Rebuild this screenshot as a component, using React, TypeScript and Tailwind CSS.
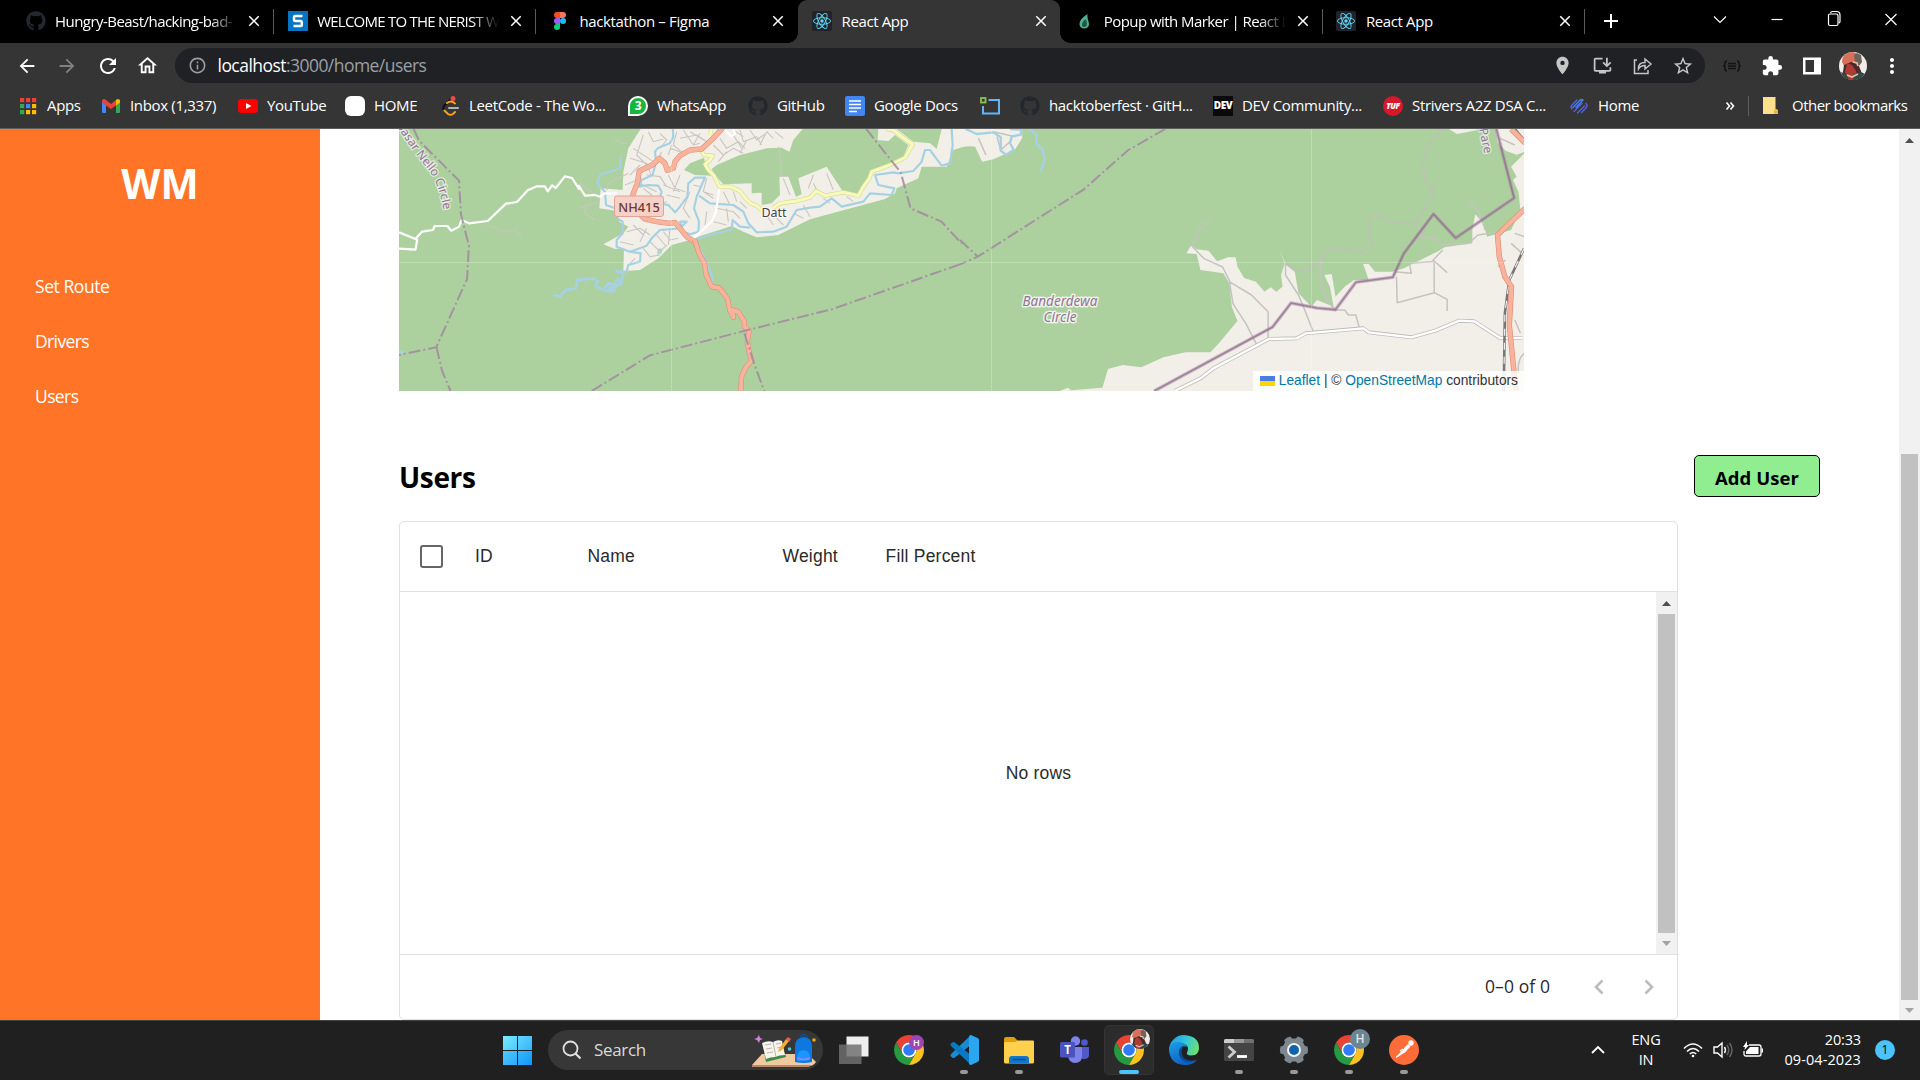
import React from "react";
import {
  MdArrowBack, MdArrowForward, MdRefresh, MdOutlineHome, MdInfoOutline, MdLocationOn,
  MdStarBorder, MdExtension, MdMoreVert, MdClose, MdAdd, MdInstallDesktop,
} from "react-icons/md";
import { FaGithub } from "react-icons/fa";

const UI = "font-['Open_Sans','Noto_Sans',sans-serif]";
const ARIAL = "font-['Liberation_Sans',Arial,sans-serif]";

function Github() {
  return <FaGithub className="size-5 text-[#22282e]" />;
}

function ReactLogo() {
  return (
    <svg viewBox="0 0 20 20" className="size-5">
      <rect width="20" height="20" rx="2" fill="#20232a" />
      <g fill="none" stroke="#61dafb" strokeWidth="0.9">
        <ellipse cx="10" cy="10" rx="8.6" ry="3.3" />
        <ellipse cx="10" cy="10" rx="8.6" ry="3.3" transform="rotate(60 10 10)" />
        <ellipse cx="10" cy="10" rx="8.6" ry="3.3" transform="rotate(120 10 10)" />
      </g>
      <circle cx="10" cy="10" r="1.7" fill="#61dafb" />
    </svg>
  );
}

function Figma() {
  return (
    <svg viewBox="0 0 20 20" className="size-5">
      <path d="M10 1H7a3 3 0 0 0 0 6h3z" fill="#f24e1e" />
      <path d="M10 1h3a3 3 0 0 1 0 6h-3z" fill="#ff7262" />
      <path d="M10 7H7a3 3 0 0 0 0 6h3z" fill="#a259ff" />
      <circle cx="13" cy="10" r="3" fill="#1abcfe" />
      <path d="M7 13h3v3a3 3 0 1 1-3-3z" fill="#0acf83" />
    </svg>
  );
}

function SiteS() {
  return (
    <svg viewBox="0 0 20 20" className="size-5">
      <rect width="20" height="20" fill="#0474c4" />
      <path d="M14.500 5H7.300q-1.300 0-1.300 1.300v2.400Q6 10 7.300 10h5.200q1.300 0 1.300 1.300v2.400q0 1.300-1.300 1.300H5.500" fill="none" stroke="#fff" strokeWidth="2.4" />
    </svg>
  );
}

function Leaf() {
  return (
    <svg viewBox="0 0 20 20" className="size-5">
      <path d="M13.500 3C9 6 5.500 9 5.500 13.500a4.800 4.800 0 0 0 9.500 0C15 10 13 8 13.500 3z" fill="#4fae90" />
      <path d="M12 8c-3 2-4.500 4-4 7 2 2 5 1 5-2z" fill="#24574a" />
    </svg>
  );
}

const tabs = [
  { title: "Hungry-Beast/hacking-bad-", icon: <Github />, tracking: "tracking-[-0.036em]", fade: true, divider: true },
  { title: "WELCOME TO THE NERIST W", icon: <SiteS />, tracking: "tracking-[-0.051em]", fade: true, divider: true },
  { title: "hacktathon – Figma", icon: <Figma />, tracking: "tracking-[-0.024em]" },
  { title: "React App", icon: <ReactLogo />, tracking: "tracking-[-0.026em]", active: true },
  { title: "Popup with Marker | React L", icon: <Leaf />, tracking: "tracking-[-0.037em]", fade: true, divider: true },
  { title: "React App", icon: <ReactLogo />, tracking: "tracking-[-0.026em]", divider: true },
];

function TabStrip() {
  return (
    <div className="flex h-[43px] bg-black pl-[11px] text-white">
      {tabs.map((t, i) => (
        <div
          key={i}
          className={`relative flex w-[262.200px] items-center pb-px pl-[14.500px] ${t.active ? "rounded-t-[9px] bg-[#353535]" : ""}`}
        >
          {t.active && (
            <>
              <span className="absolute bottom-0 -left-[10px] size-[10px] bg-[radial-gradient(circle_at_0_0,transparent_9.500px,#353535_10px)]" />
              <span className="absolute -right-[10px] bottom-0 size-[10px] bg-[radial-gradient(circle_at_100%_0,transparent_9.500px,#353535_10px)]" />
            </>
          )}
          {t.icon}
          <span
            className={`ml-[9.500px] w-[182px] overflow-hidden text-[15px] leading-5 whitespace-nowrap ${t.tracking} ${t.fade ? "[mask-image:linear-gradient(to_right,black_155px,transparent_182px)]" : ""}`}
          >
            {t.title}
          </span>
          <MdClose className="ml-[8px] size-[18px] shrink-0" />
          {t.divider && <span className="absolute top-[9px] -right-px h-[25px] w-px bg-[#5a5a5a]" />}
        </div>
      ))}
      <div className="flex w-[54px] items-center justify-center pb-px">
        <MdAdd className="size-[24px]" />
      </div>
      <div className="ml-auto flex h-[37px] items-center gap-[29px] pr-[15px]">
        {["M8 11.500l6 6L20 11.500", "M8.500 14.500h11", "", "M8.500 9l11 11M19.500 9l-11 11"].map((d, i) => (
          <svg key={i} viewBox="0 0 28 28" className="size-[28px]" fill="none" stroke="#fff" strokeWidth="1.200">
            {d ? <path d={d} /> : <path d="M8.500 10.500q0-1.500 1.500-1.500h6.500q1.500 0 1.500 1.500v8.500q0 1.500-1.500 1.500H10q-1.500 0-1.500-1.500zM10.500 8q.5-1.500 2-1.500h4q3.500 0 3.500 3.500v6.500q0 1-1 1.500" />}
          </svg>
        ))}
      </div>
    </div>
  );
}

function Avatar({ className }: { className: string }) {
  return (
    <svg viewBox="0 0 28 28" className={className}>
      <defs><clipPath id="avatarClip"><circle cx="14" cy="14" r="14" /></clipPath></defs>
      <g clipPath="url(#avatarClip)">
        <rect width="28" height="28" fill="#f1ece8" />
        <path d="M3 10Q3 1 12 0q6 0 7 5l-3 7-10 4z" fill="#d9715a" />
        <path d="M15 3l3-2 4 2 1 7-3 4-4-3z" fill="#6c635a" />
        <path d="M5 13l7-3 7 2 3 7 1 9H6L4 20z" fill="#4a2a2a" />
        <path d="M8 11l5 2 4 6 2 9H9l-3-8z" fill="#b03a34" />
        <path d="M2 20l5 2 3 6H4zM15 22l7-2 4 2-6 6h-6z" fill="#2d4a46" />
        <path d="M8 23l5 2 6-3M14 10l4 1 1 3" stroke="#eeb8a4" strokeWidth="1.800" fill="none" />
      </g>
    </svg>
  );
}

function Toolbar() {
  return (
    <div className="flex h-[45px] items-center bg-[#353535] text-white">
      <div className="flex w-[175px] items-center gap-[18px] pl-[16px]">
        <MdArrowBack className="size-[22px]" />
        <MdArrowForward className="size-[22px] text-[#808080]" />
        <MdRefresh className="size-[24px]" />
        <MdOutlineHome className="-ml-[2px] size-[23px]" />
      </div>
      <div className="flex h-[35px] w-[1530px] items-center rounded-full bg-[#202124] pl-[13px]">
        <MdInfoOutline className="size-[19px] text-[#9aa0a6]" />
        <span className="ml-[10.500px] text-[17.500px] tracking-[-0.031em] text-[#9aa0a6]">
          <span className="text-white">localhost</span>:3000/home/users
        </span>
        <div className="ml-auto flex items-center gap-[19px] pr-[11px] text-[#c4c7c5]">
          <MdLocationOn className="size-[21px]" />
          <MdInstallDesktop className="size-[21px]" />
          <svg viewBox="0 0 21 21" className="size-[21px]" fill="none" stroke="currentColor" strokeWidth="1.500">
            <path d="M5 5H2.500v13.500h13.500V15M6.500 14q-.5-6.500 6.500-6.500V4l6 5-6 5v-3.500q-4.500 0-6.500 3.500z" />
          </svg>
          <MdStarBorder className="size-[22px]" />
        </div>
      </div>
      <div className="flex flex-1 items-center gap-[19px] pl-[17px]">
        <svg viewBox="0 0 20 20" className="size-5" fill="none" stroke="#141414" strokeWidth="1.600">
          <path d="M5 5Q3 5 3 7v1q0 2-2 2 2 0 2 2v1q0 2 2 2M15 5q2 0 2 2v1q0 2 2 2-2 0-2 2v1q0 2-2 2M6 7.500h8M6 10h8M6 12.500h8" />
        </svg>
        <MdExtension className="size-[22px]" />
        <svg viewBox="0 0 20 20" className="size-5">
          <path d="M1 1.500h18v17H1zM3.500 4v12H12V4z" fill="#fff" fillRule="evenodd" />
        </svg>
        <Avatar className="-ml-[2px] size-[28px]" />
        <MdMoreVert className="-ml-[6px] size-[24px]" />
      </div>
    </div>
  );
}

const appColors = ["#ea4335", "#ea4335", "#ea4335", "#34a853", "#4285f4", "#fbbc04", "#34a853", "#fbbc04", "#fbbc04"];

const bookmarks = [
  {
    label: "Apps", w: "w-[83px]",
    icon: (
      <svg viewBox="0 0 20 20" className="size-5">
        {appColors.map((c, i) => <rect key={i} x={2 + (i % 3) * 6} y={2 + Math.floor(i / 3) * 6} width="4.200" height="4.200" fill={c} />)}
      </svg>
    ),
  },
  {
    label: "Inbox (1,337)", w: "w-[137px]",
    icon: (
      <svg viewBox="0 0 20 20" className="size-5">
        <path d="M1 5v11q0 1 1 1h3V8z" fill="#4285f4" /><path d="M15 8v9h3q1 0 1-1V5z" fill="#34a853" />
        <path d="M1 5q.5-3 3.500-1.500L10 8l5.500-4.500Q18.500 2 19 5v1l-4 3.500-5 3.500-5-3.500L1 6z" fill="#ea4335" />
        <path d="M15 4q3.500-2 4 1v1.500l-4 3z" fill="#fbbc04" />
      </svg>
    ),
  },
  {
    label: "YouTube", w: "w-[107px]",
    icon: (
      <svg viewBox="0 0 20 20" className="size-5">
        <rect y="3" width="20" height="14" rx="3.500" fill="#f00" /><path d="M8 7l5.500 3L8 13z" fill="#fff" />
      </svg>
    ),
  },
  { label: "HOME", w: "w-[95px]", icon: <span className="size-5 rounded-[6px] bg-white" /> },
  {
    label: "LeetCode - The Wo...", w: "w-[188px]",
    icon: (
      <svg viewBox="0 0 20 20" className="size-5" fill="none" strokeLinecap="round" strokeWidth="2">
        <path d="M12 2L4 10q-1.500 2 0 4" stroke="#111" /><path d="M4.500 14.500L8 18q2.500 1.500 5 0l2-2" stroke="#ffa116" />
        <path d="M7 7q3-2.500 6-1l2 1.500" stroke="#ffa116" /><path d="M9 12h9" stroke="#b3b3b3" />
        <circle cx="13" cy="2.500" r="1.500" fill="#e84e4e" stroke="#e84e4e" />
      </svg>
    ),
  },
  {
    label: "WhatsApp", w: "w-[120px]",
    icon: (
      <span className="flex size-5 items-center justify-center rounded-full rounded-bl-[4px] border-2 border-white bg-[#12b83a] text-[12px] font-bold">3</span>
    ),
  },
  { label: "GitHub", w: "w-[97px]", icon: <Github /> },
  {
    label: "Google Docs", w: "w-[135px]",
    icon: (
      <svg viewBox="0 0 20 20" className="size-5">
        <rect width="20" height="20" rx="2" fill="#4285f4" />
        <path d="M4 5h12M4 8.500h12M4 12h12M4 15.500h8" stroke="#fff" strokeWidth="1.700" />
      </svg>
    ),
  },
  {
    label: "", w: "w-[40px]",
    icon: (
      <svg viewBox="0 0 20 20" className="size-5" fill="none">
        <rect x="1" y="2" width="4.500" height="4.500" stroke="#8bc34a" strokeWidth="1.800" />
        <path d="M8.500 4H19v13.500H3V10" stroke="#64b5f6" strokeWidth="2" />
      </svg>
    ),
  },
  { label: "hacktoberfest · GitH...", w: "w-[193px]", icon: <Github /> },
  {
    label: "DEV Community...", w: "w-[170px]",
    icon: <span className="flex size-5 items-center justify-center bg-[#0a0a0a] text-[10px] font-extrabold tracking-tighter">DEV</span>,
  },
  {
    label: "Strivers A2Z DSA C...", w: "w-[186px]",
    icon: <span className="flex size-5 items-center justify-center rounded-full bg-[#d7182a] text-[8px] font-extrabold tracking-tighter italic">TUF</span>,
  },
  {
    label: "Home", w: "w-[150px]",
    icon: (
      <svg viewBox="0 0 20 20" className="size-5" fill="none" stroke="#5561e0" strokeWidth="1.400" strokeLinecap="round">
        <path d="M3 13q-2-2 0-4L8 4M5 15.500L13 7.500M8.500 17l7-7M17 7.500q2 2 0 4.500L12.500 16.500" /><path d="M4 11.500l7-7.500q2-1 3 0l-7 7.500" stroke="#4285f4" />
      </svg>
    ),
  },
];

function BookmarksBar() {
  return (
    <div className="flex h-[41px] items-center border-b border-[#5d5d5d] bg-[#353535] pb-[5px] pl-[18px] text-[15px] tracking-[-0.022em] whitespace-nowrap text-white">
      {bookmarks.map((b, i) => (
        <div key={i} className={`flex shrink-0 items-center gap-[9px] ${b.w}`}>
          <span className="flex size-5 shrink-0">{b.icon}</span>
          {b.label}
        </div>
      ))}
      <div className="flex flex-1 items-center pl-[6px] tracking-[-0.035em]">
        <svg viewBox="0 0 10 10" className="size-[10px]" fill="none" stroke="#fff" strokeWidth="1.600"><path d="M1.500 1.500L4.500 5l-3 3.500M5.500 1.500l3 3.500-3 3.500" /></svg>
        <span className="ml-[13px] h-5 w-px bg-[#5f5f5f]" />
        <svg viewBox="0 0 18 20" className="mr-[12px] ml-[13px] h-5 w-[18px]">
          <path d="M1 1h12.500v12l2 1v4H1z" fill="#ffe08a" /><path d="M12 18v-4l2-1 2 1v4z" fill="#e8b93c" />
        </svg>
        Other bookmarks
      </div>
    </div>
  );
}

const labelHalo = { paintOrder: "stroke" as const };

const yellowRoad =
  "M395 12L390 30M365 78L372 90 398 92 390 105 375 118 385 135 402 152 418 185 450 185 480 198 498 222 512 235 530 242 545 255M580 248L600 235 650 228 690 218 708 198 735 212 790 202 835 212 850 185 868 160 875 140 930 120 975 98 998 58 965 35 940 15 920 12";
const highwayNorth =
  "M428 8L400 40 365 72 330 75 300 92 285 110 280 130 262 136 255 115 238 100 220 118 178 138 172 175 160 205 150 240 195 282 230 290 270 295 285 292 300 310 320 335 345 350 348 362";
const highwaySouth =
  "M838 360L850 400 865 430 870 465 885 500 905 503 928 535 935 570 945 592 942 570 958 575 975 605 975 620 988 632 983 665 988 695 995 722 980 740 967 770 965 813";
const highwayEast = "M1490 27l38 42M1528 265l-75 80 5 65 15 60 18 30-6 115 18 200";

function RouteMap() {
  return (
    <svg viewBox="399 129 1125 262" className="block h-[262px] w-[1125px]" fill="none" strokeLinejoin="round">
      <rect x="399" y="129" width="1125" height="262" fill="#add19e" />

      {/* town built-up area and the forest patches inside it */}
      <g transform="translate(580 125) scale(0.33333)">
        <path d="M182 12L145 70 130 140 128 195 62 190 58 250 112 258 118 290 145 305 130 325 70 358 105 372 132 368 130 438 180 435 235 400 275 360 330 345 370 330 455 303 490 320 530 337 595 330 690 283 915 222 945 205 950 190 1015 160 1025 125 1100 125 1120 75 1160 62 1188 65 1200 90V12z" fill="#f2efe9" />
        <path d="M410 120L480 90 560 70 605 68 628 80 640 45 668 12H895L893 45 925 48 945 30 985 60 970 95 870 140 860 165 840 208 790 202 740 125 655 160 665 208 648 215 625 155 598 155 600 210 575 235 545 240 545 203 515 205 515 175 430 178 405 150 395 132z" fill="#add19e" />
        <path d="M950 12L1000 50 1050 55 1070 72 1085 12zM312 135L330 115 372 98 380 130 398 152 345 150z" fill="#add19e" />
        <path d="M232 375l8-7 8 6-4 12-12 4z" fill="#a9dfc8" />
        <g stroke="#c9c6c2" strokeWidth="3.300">
          <path d="M160 70l60 40M190 30l-20 60 40 40M205 20l15 30 30-8M150 100l50 15 15 40M150 150l30-30M135 180l50-20M240 25l20 20-20 25M245 80l-15 35M290 20l-10 40 30 25M300 40l50-10 30 20M310 15l30 45 20-5M330 20l50 30M340 60l20-35M270 70l30 10M265 90l10-30M420 40l20 30 35-20 20 20M400 60l30 30 30-20 30 15M440 80l-25 30M460 30l25 40M480 15l10 35 40-15 15 25M510 15l20 30 35-25M540 60l20-40M480 85l20-40M560 20l20 20M585 20l25 20M460 15l30 20" />
          <path d="M200 150l40 5 20 30M190 190l25 20-5 30M170 170l60 30M265 150l20 40 30 10M250 180l50 20M260 210l40 10M300 150l-20 50M230 240l30-10M330 200l-20 50 20 30M340 180l20 5M380 160l-10 40 30 20M370 200l30 10M430 200l20 40M460 200l10 30M410 250l50 10 20 20M380 260l-5 40M400 290l40 10M440 250l5 40M480 230l20 20" />
          <path d="M140 320l40-10 30 20M160 300l30 30M180 350l20-40M190 370l20 25 30-5M210 350l30 30 20-20M230 330l25 30M250 320l20 25 25-5M165 400l-15 15M270 310l-5 50M120 350l40 10M590 280l20 20M560 270l20 30M670 240l20 35M640 265l30 15M700 175l15 30M740 145l20 50M700 150l-15 40M610 160l20 50M730 220l20 15M800 215l20 15" />
          <path d="M595 65l10 60-5 30M80 195l5-20 60-30M0 175l40 30M105 40l20 15 15 0M0 250l60-20M20 235l-5 30 30 20" />
        </g>
        <g stroke="#a5d1e2" strokeWidth="6.500">
          <path d="M278 12L280 35 270 55 235 68 225 80 228 110 218 150 185 165 178 185 205 180 235 182 245 200 235 235 265 240 285 262 300 245 322 215 325 175 345 158 375 158 365 180 350 215 342 250 357 290 355 320 330 328 310 320 300 290 320 290 300 310 240 315 215 340 200 362 150 380 110 365 110 345 128 325 128 290 112 280" />
          <path d="M357 212L390 235 460 240 490 260 505 295 530 322 580 320 620 305 650 255 690 248 720 245 755 220 785 245 850 230 870 205 935 210 943 190 895 180 885 150 940 142 955 145 1000 138 1025 110 1035 75 1050 75 1085 122 1110 115 1118 60 1115 12M350 345L385 330 455 315 458 285 480 305 510 308M350 360L370 390 395 450 400 480M122 95L120 130 60 150 52 175 75 200 78 240 105 250M150 380L182 385 180 410 145 420 140 440 105 440" />
        </g>
        <path d="M-5 180L15 212 45 210 60 215 75 205 110 205M418 190L408 260 395 290 340 340M435 15l20 20 10-10-5-13" stroke="#fff" strokeWidth="6.500" />
        <path d={yellowRoad} stroke="#d6dd8c" strokeWidth="13" />
        <path d={yellowRoad} stroke="#f7fabf" strokeWidth="9" />
        <path d={highwayNorth} stroke="#dc8c74" strokeWidth="16" />
        <path d={highwayNorth} stroke="#f9b29c" strokeWidth="13" />
      </g>

      {/* western hills */}
      <g transform="translate(390 120) scale(0.3635 0.33333)">
        <path vectorEffect="non-scaling-stroke" stroke="#bccbb0" strokeWidth="1.800" d="M265 315l30 10 20 10 30-5 15 20" />
        <path vectorEffect="non-scaling-stroke" stroke="#a5d1e2" strokeWidth="2.800" d="M450 525l18 5 15-20 28-5 5-25 40-5 15 8-5 15 25 15 25 0 0-18-15-5-10 15M600 505l20-5 18-10 3-30-20-8M612 505l15-30 10 20M25 695l15 3" />
        <path vectorEffect="non-scaling-stroke" stroke="#fff" strokeWidth="2.200" d="M25 337l50 22-5 30-45-3M70 357l18-22 30-5 5-12 35 0 10 14 22-12 7-20 20 10 52-7 50-52 30-5 30-35 25-12 22 0 8 15 12-18 10 8 25-35 20 5 20 35" />
        <path vectorEffect="non-scaling-stroke" stroke="#dc8c74" strokeWidth="5.200" d={highwaySouth} />
        <path vectorEffect="non-scaling-stroke" stroke="#f9b29c" strokeWidth="4.100" d={highwaySouth} />
        <g stroke="#a287a0" strokeOpacity="0.850" strokeWidth="2" strokeDasharray="12 3 2 3">
          <path vectorEffect="non-scaling-stroke" d="M65 27l15 35 110 120 5 100 22 95-5 100-85 205-102 23M128 682l15 70 25 65" />
          <path vectorEffect="non-scaling-stroke" d="M555 813l160-107 280-79 220-59 353-135M1310 27l95 130 27 108 85 40 55 65M975 640l25 85 30 90" />
        </g>
      </g>

      {/* eastern half: plains, district border, railway */}
      <g transform="translate(960 120) scale(0.3699 0.33333)">
        <path d="M0 27V80L40 78 60 125 90 118 148 90 168 55V27z" fill="#f2efe9" />
        <path d="M270 813l22-10 8 8 85-8 15-56 40-12 50 7 60-30 60-15h67l23-27 50-67-15-43-7-70-16-30-62-10-10-48-28-2 13-24 15 12 32 4 23 32 30-12h20l5 28 18 34 32 11 23 30 17-13 15 13 17-15-4-35 10-35-13-35 15 35 25 25 10 65 35 40 15-20 45 20-10-60-15-35 20-3 10 68 25-30 25-20h40l-15-48h15l17 23h48l30-10 90-50 20-13 75-12v-40l8-47 22 27 10 40 65-20 25-60-5-55-15-35 10-10-15-30 38-42V813z" fill="#f2efe9" />
        <path d="M1322 27l22 15 55-12 0-3zM1448 27l5 40 22 25 30 12 25-10V27z" fill="#f2efe9" />
        <g stroke="#c4c3c0" strokeWidth="1.500">
          <path vectorEffect="non-scaling-stroke" d="M625 376l35 40 50 25 18 40 10 70 35 60 30 65M728 485l60 40 45 50 0 80M880 430l0 35 35 60 15 40 25 70M975 420l0 60 15 60 25 30 25 0 10 15 20 0 10 40M1240 320l10 35 30-5 25 25 70-5 25-25 60-10M1180 470l2 78 100-30 35 20 0 35M1282 518l0-95 35 35M1215 430l5 30-45-5M1215 430l60-5 30-35" />
          <path vectorEffect="non-scaling-stroke" d="M1375 250l25 20 20 60M1490 370l30 30M1495 500l-5 35M1500 600l15 40M1525 700q-20 20-15 60M1475 420l-20 20M1500 340l25 10M1500 75l-40-20M630 375l15-45 30-25M50 55l20 50M100 50l10 40 30-30M90 35l60 15" />
        </g>
        <path vectorEffect="non-scaling-stroke" stroke="#b9c5b0" strokeWidth="2.200" d="M880 430l30 25 35-5 30-35 30-30 50 0 35 15 25-25-12-40 5-45 25-3 40 20 60 5 15-30 28-45 3-35-22-20-5-60 15-50 20-25 18-20" />
        <g stroke="#bebdba" strokeWidth="4"><path vectorEffect="non-scaling-stroke" d="M580 813l70-38 35-30 150-88 75-2 25-15 155-15 15 12 115 15 65-20 65-30 40 2 70 50 60 0" /></g>
        <g stroke="#fff" strokeWidth="2.400"><path vectorEffect="non-scaling-stroke" d="M580 813l70-38 35-30 150-88 75-2 25-15 155-15 15 12 115 15 65-20 65-30 40 2 70 50 60 0" /></g>
        <g stroke="#a5d1e2" strokeWidth="2.400">
          <path vectorEffect="non-scaling-stroke" d="M15 27l30 15 45-5 20 15 0 40 15 12 20-15-10-20 5-20 25-5 0-15-30-2" />
          <path vectorEffect="non-scaling-stroke" d="M185 27l22 15 0 30 15 15 8 30-12 38" />
        </g>
        <path vectorEffect="non-scaling-stroke" stroke="#a287a0" strokeOpacity="0.850" strokeWidth="2" strokeDasharray="12 3 2 3" d="M555 27L455 90 335 208 48 410 0 433M0 360l48 50" />
        <path vectorEffect="non-scaling-stroke" stroke="#a988a5" strokeOpacity="0.550" strokeWidth="3.600" d="M525 813l320-192 50-72 70 15 50 5 55-82 100-15 30-72 80-118 60 72 158-120-48-207" />
        <path vectorEffect="non-scaling-stroke" stroke="#8a6a88" strokeOpacity="0.700" strokeWidth="1.500" d="M525 813l320-192 50-72 70 15 50 5 55-82 100-15 30-72 80-118 60 72 158-120-48-207" />
        <path vectorEffect="non-scaling-stroke" stroke="#777" strokeWidth="2.600" d="M1500 27l30 40M1525 385l-40 95-12 100-3 233" />
        <path vectorEffect="non-scaling-stroke" stroke="#eee" strokeWidth="1.200" strokeDasharray="7 7" d="M1525 385l-40 95-12 100-3 233" />
        <path vectorEffect="non-scaling-stroke" stroke="#dc8c74" strokeWidth="5.400" d={highwayEast} />
        <path vectorEffect="non-scaling-stroke" stroke="#f9b29c" strokeWidth="4.200" d={highwayEast} />
      </g>

      <path d="M399 262.500H1524M671.500 129V391M991.500 129V391M1311.500 129V391" stroke="#fff" strokeOpacity="0.220" />

      <rect x="614.500" y="196" width="49" height="20.500" rx="2.500" fill="#f6d1c8" stroke="#e2a394" />
      <g className="font-['Noto_Sans',sans-serif]" style={labelHalo} strokeLinejoin="round">
        <text x="639" y="211.500" textAnchor="middle" fontSize="12.800" fontWeight="500" fill="#6d3b33">NH415</text>
        <text x="774" y="217" textAnchor="middle" fontSize="12.500" fill="#444" stroke="#fff" strokeOpacity="0.600" strokeWidth="2">Datt</text>
        <g fill="#95729a" stroke="#fff" strokeOpacity="0.750" strokeWidth="3" fontStyle="italic" fontSize="13.500" textAnchor="middle">
          <text x="1060" y="305.500">Banderdewa</text>
          <text x="1060" y="322">Circle</text>
        </g>
        <path id="basarPath" d="M396 125Q413 152 427 168T445 222" />
        <g fill="#95729a" stroke="#fff" strokeOpacity="0.600" strokeWidth="2.500" fontSize="12">
          <text><textPath href="#basarPath">Basar Nello Circle</textPath></text>
          <text transform="translate(1479 129) rotate(78)">Pare</text>
        </g>
      </g>
    </svg>
  );
}

function Arrow({ up, dark }: { up?: boolean; dark?: boolean }) {
  return (
    <svg viewBox="0 0 9 5" className={`h-[5px] w-[9px] ${up ? "" : "rotate-180"}`}>
      <path d="M4.500 0L9 5H0z" fill={dark ? "#505050" : "#a3a3a3"} />
    </svg>
  );
}

function Sidebar() {
  return (
    <aside className="w-[320px] shrink-0 bg-[#ff7426] text-white">
      <h1 className="mt-[28px] text-center text-[40.500px] leading-[54px] font-bold tracking-[0.005em]">WM</h1>
      <nav className="mt-[63px] flex flex-col gap-[31px] pl-[35px] text-[17.500px] leading-[24px] tracking-[-0.035em]">
        <a className="tracking-[-0.025em]">Set Route</a>
        <a>Drivers</a>
        <a>Users</a>
      </nav>
    </aside>
  );
}

function UsersGrid() {
  return (
    <div className={`mt-[24px] flex h-[499px] w-[1279px] flex-col rounded-[5px] border border-[#e0e0e0] text-[17.500px] tracking-[0.012em] text-[#2a2a2a] ${ARIAL}`}>
      <div className="flex h-[70px] items-center border-b border-[#e0e0e0] pl-[19.500px]">
        <span className="size-[23px] rounded-[3px] border-[2.500px] border-[#666]" />
        <span className="ml-[32.500px] w-[112.500px]">ID</span>
        <span className="w-[195px]">Name</span>
        <span className="w-[103px]">Weight</span>
        <span>Fill Percent</span>
      </div>
      <div className="flex h-[363px] border-b border-[#e0e0e0]">
        <div className="flex flex-1 items-center justify-center pl-[21px]">No rows</div>
        <div className="flex w-[21px] flex-col items-center bg-[#f1f1f1]">
          <div className="flex h-[22px] items-center"><Arrow up dark /></div>
          <div className="w-[17px] flex-1 bg-[#c1c1c1]" />
          <div className="flex h-[21px] items-center"><Arrow /></div>
        </div>
      </div>
      <div className={`flex flex-1 items-center justify-end pr-[12px] pb-px text-[17.500px] tracking-[0.005em] ${UI}`}>
        <span>0–0 of 0</span>
        <svg viewBox="0 0 30 30" className="ml-[34px] size-[30px]" fill="none" stroke="#bdbdbd" strokeWidth="2.600"><path d="M18.500 8.500L12 15l6.500 6.500" /></svg>
        <svg viewBox="0 0 30 30" className="ml-[21px] size-[30px]" fill="none" stroke="#bdbdbd" strokeWidth="2.600"><path d="M10.500 8.500L17 15l-6.500 6.500" /></svg>
      </div>
    </div>
  );
}

function Content() {
  return (
    <main className="min-w-0 flex-1 bg-white pl-[79px]">
      <div className="relative w-[1125px]">
        <RouteMap />
        <div className={`absolute right-0 bottom-0 flex h-5 items-center bg-white/80 pr-[6px] pl-[7px] text-[13.750px] whitespace-pre text-[#333] ${ARIAL}`}>
          <span className="mr-[4px] flex h-[10px] w-[15px] flex-col"><i className="flex-1 bg-[#4c7be1]" /><i className="flex-1 bg-[#ffd500]" /></span>
          <span className="text-[#0078a8]">Leaflet</span> | © <span className="text-[#0078a8]">OpenStreetMap</span> contributors
        </div>
      </div>
      <div className="mt-[64px] flex h-[42px] items-center justify-between pr-[79px] text-black">
        <h2 className="mt-[2px] text-[28px] font-bold tracking-[-0.012em]">Users</h2>
        <button className="h-[42px] w-[126px] rounded-[5px] border border-black bg-[#90ee90] pt-[3px] text-[18.500px] font-bold tracking-[0.005em]">Add User</button>
      </div>
      <UsersGrid />
    </main>
  );
}

function PageScrollbar() {
  return (
    <div className="flex w-[21px] shrink-0 flex-col items-center bg-[#f1f1f1]">
      <div className="flex h-[22px] items-center"><Arrow up dark /></div>
      <div className="mt-[303px] w-[17px] flex-1 bg-[#c1c1c1]" />
      <div className="flex h-[20px] items-center"><Arrow /></div>
    </div>
  );
}

function Chrome({ badge }: { badge: React.ReactNode }) {
  return (
    <span className="relative size-[30px]">
      <svg viewBox="0 0 48 48" className="size-[30px]">
        <path d="M24 12H44.780A24 24 0 0 0 3.220 12L13.600 30A12 12 0 0 1 24 12z" fill="#ea4335" />
        <path d="M13.600 30L3.220 12A24 24 0 0 0 24 48L34.400 30A12 12 0 0 1 13.600 30z" fill="#249a41" />
        <path d="M34.400 30L24 48A24 24 0 0 0 44.780 12H24A12 12 0 0 1 34.400 30z" fill="#fcc31e" />
        <circle cx="24" cy="24" r="12" fill="#fff" /><circle cx="24" cy="24" r="9.300" fill="#2f7cf6" />
      </svg>
      {badge}
    </span>
  );
}

function TaskView() {
  return (
    <svg viewBox="0 0 30 30" className="size-[30px]">
      <path d="M7.500 1.500h22v20h-22z" fill="#eee" /><path d="M0 9.500h22.500V29H0z" fill="#707070" fillOpacity="0.850" />
    </svg>
  );
}

function VsCode() {
  return (
    <svg viewBox="0 0 30 30" className="size-[30px]">
      <path d="M22 0L2.500 18.500q-2 1.500-.5 3l1.500 1.200q1 .7 2 0L22.500 9.500z" fill="#1a8ad4" />
      <path d="M22 30L2.500 11.500q-2-1.500-.5-3l1.500-1.200q1-.7 2 0L22.500 20.500z" fill="#0a79c4" />
      <path d="M22 0l7 3.300q1 .7 1 1.700v20q0 1-1 1.700L22 30q-1.500 0-2-1.500V1.500Q20.500 0 22 0z" fill="#2aa7f0" />
    </svg>
  );
}

function Explorer() {
  return (
    <svg viewBox="0 0 30 30" className="size-[30px]">
      <path d="M0 4q0-2 2-2h8l4 4h10v5H0z" fill="#e09d10" />
      <path d="M0 8q0-1 1-1h10l3-1.500h15q1 0 1 1V27q0 1.500-1.500 1.500h-27Q0 28.500 0 27z" fill="#ffd04c" />
      <path d="M5 28.500V24q0-3 3-3h14q3 0 3 3v4.500z" fill="#1277c8" /><path d="M8.500 24.500h13" stroke="#0a4f8c" strokeWidth="1.500" />
    </svg>
  );
}

function Teams() {
  return (
    <span className="relative size-[30px]">
      <svg viewBox="0 0 30 30" className="size-[30px]">
        <circle cx="25.500" cy="7.500" r="3.300" fill="#5059c9" /><path d="M20 12h10v8q0 4-5 4-4 0-5-4z" fill="#5059c9" />
        <circle cx="16.500" cy="6" r="4.700" fill="#7b83eb" /><path d="M9 12h14v9q0 7-7 7-6 0-7-7z" fill="#7b83eb" />
        <rect x="1" y="7" width="15" height="15.500" rx="1.500" fill="#4b53bc" />
      </svg>
      <span className="absolute top-[7px] left-px w-[15px] text-center text-[11.500px] leading-[15px] font-bold text-white">T</span>
    </span>
  );
}

function Edge() {
  return (
    <svg viewBox="0 0 30 30" className="size-[30px]">
      <defs>
        <linearGradient id="edgeTop" x1="0" y1="0.300" x2="1" y2="0.600"><stop stopColor="#1a9fe8" /><stop offset="0.550" stopColor="#35c9d6" /><stop offset="1" stopColor="#6fe06a" /></linearGradient>
        <linearGradient id="edgeBody" x1="0" y1="0" x2="0.500" y2="1"><stop stopColor="#1f9ee8" /><stop offset="1" stopColor="#0c5fc0" /></linearGradient>
      </defs>
      <path d="M0 15A15 15 0 0 1 15 0q15 1 15 13 0 7.500-8 7.500-5 0-4-3 1-2 1-4 0-4-6-5Q4 8 0 15z" fill="url(#edgeTop)" />
      <path d="M0 15q1-8 9-8 7 0 9 5-6-3-8 5 0 8 9 9.500 4 .5 9-2-4 6-13 5.500Q1 29 0 15z" fill="url(#edgeBody)" />
      <path d="M10 16q0 10 8 11 5 .5 10.500-3-2 2-7.500 1.500-8-1-8.500-8.500 0-3 2-5-4 0-4.500 4z" fill="#0a4a98" />
    </svg>
  );
}

function Terminal() {
  return (
    <svg viewBox="0 0 30 30" className="size-[30px]">
      <rect y="4" width="30" height="22" rx="1.500" fill="#444" />
      <path d="M0 8V5.500Q0 4 1.500 4H10v4z" fill="#ccc" /><path d="M10 4h10v4H10z" fill="#999" /><path d="M20 4h8.500Q30 4 30 5.500V8H20z" fill="#707070" />
      <path d="M4.500 11.500l6 5.500-6 5.500" fill="none" stroke="#ccc" strokeWidth="2.800" /><path d="M13 21.500h10" stroke="#fff" strokeWidth="2.800" />
    </svg>
  );
}

function Settings() {
  return (
    <svg viewBox="0 0 30 30" className="size-[30px]">
      <circle cx="15" cy="15" r="11.500" fill="#7d8790" />
      {[0, 60, 120, 180, 240, 300].map((a) => (
        <path key={a} d="M10.500 5.500L11.500 1.500Q15 .2 18.500 1.500L19.500 5.500z" fill="#7d8790" transform={`rotate(${a + 30} 15 15)`} />
      ))}
      <circle cx="15" cy="15" r="7" fill="#f3f3f3" /><circle cx="15" cy="15" r="5" fill="#0f62ac" />
    </svg>
  );
}

function Postman() {
  return (
    <svg viewBox="0 0 30 30" className="size-[30px]">
      <circle cx="15" cy="15" r="15" fill="#ff6c37" />
      <path d="M6.500 22.500l8-8.500 3-3 2.500 2-3.500 4zM15 13l4-4 2.500 2.500-3 3z" fill="#fff" />
      <path d="M7 22.500l9-6M14 14l-3 2" stroke="#fff" strokeWidth="1.200" /><circle cx="22" cy="8" r="2.700" fill="#fff" />
    </svg>
  );
}

function SearchArt() {
  return (
    <svg viewBox="0 0 64 34" className="h-[34px] w-[64px]">
      <path d="M10 20h46l8 8q-2 4-10 5H0v-2z" fill="#f0c9a0" /><path d="M0 31h60l-4 2H0z" fill="#b98a64" />
      <path d="M11 12l3 16 20-5-1-4-18 5-2-12z" fill="#3c8c4c" /><path d="M10 9q6-3 11-1 5-3 9-1l3 14q-6 0-10 2-5 0-9 2z" fill="#f7f4ee" />
      <path d="M21 8l3 15M13 11l6-1M14 15l6-1M15 19l6-1M24 10l5-1M25 14l5-1" stroke="#bdb6ae" />
      <path d="M27 15l7-10 3 2-7 9-4 2z" fill="#f8ad32" /><path d="M34 5l2-2 3 2-2 3z" fill="#e85d4a" />
      <path d="M43 28V12q0-8 9-9 8 1 8 9v16q-8 2-17 0z" fill="#0c78e0" /><path d="M45 27v-4q1-7 7-7 6 1 6 7v3q-6 2-13 1z" fill="#1b96ff" />
      <path d="M48 4q3-7 8 0" stroke="#0b4ea8" fill="none" strokeWidth="1.500" /><path d="M45 24q7 3 13 0" stroke="#a080ff" fill="none" strokeWidth="1.500" />
      <path d="M7 1l1 3 3 1-3 1-1 3-2-3-3-1 3-1z" fill="#d87af0" /><circle cx="37.500" cy="15" r="1.800" fill="#50c8d8" /><circle cx="62" cy="6" r="1.800" fill="#f5a50a" />
    </svg>
  );
}

const apps: { icon: React.ReactNode; state?: "open" | "active" }[] = [
  { icon: <TaskView /> },
  { icon: <Chrome badge={<span className="absolute top-0 left-[15px] flex size-[15px] items-center justify-center rounded-full bg-[#a142b5] text-[9px] font-semibold text-white">H</span>} /> },
  { icon: <VsCode />, state: "open" },
  { icon: <Explorer />, state: "open" },
  { icon: <Teams /> },
  { icon: <Chrome badge={<Avatar className="absolute -top-[6px] left-[16px] size-[20px]" />} />, state: "active" },
  { icon: <Edge /> },
  { icon: <Terminal />, state: "open" },
  { icon: <Settings />, state: "open" },
  { icon: <Chrome badge={<span className="absolute -top-[6px] left-[16px] flex size-[20px] items-center justify-center rounded-full bg-[#6d8591] text-[12px] font-semibold text-[#dde5e8]">H</span>} />, state: "open" },
  { icon: <Postman />, state: "open" },
];

function Taskbar() {
  return (
    <footer className="flex h-[60px] items-center border-t border-[#414441] bg-[#202020] pb-px pl-[503px] text-white">
      <div className="grid size-[29px] grid-cols-2 gap-px bg-[#202020]">
        <i className="bg-linear-to-br from-[#78ecff] to-[#4cc8fc]" />
        <i className="bg-linear-to-br from-[#5fd6ff] to-[#35b4fb]" />
        <i className="bg-linear-to-br from-[#50caff] to-[#28aafa]" />
        <i className="bg-linear-to-br from-[#38b8fc] to-[#0c96fa]" />
      </div>
      <div className="ml-[16px] flex h-[40px] w-[275px] items-center overflow-hidden rounded-full bg-[#373737] pl-[14px]">
        <svg viewBox="0 0 20 20" className="size-5" fill="none" stroke="#e0e0e0" strokeWidth="1.800"><circle cx="8.500" cy="8.500" r="7" /><path d="M13.500 13.500l5 5" strokeWidth="2.200" /></svg>
        <span className="ml-[12px] text-[17px] tracking-[-0.02em] text-[#dadada]">Search</span>
        <span className="mt-[2px] mr-[7px] ml-auto"><SearchArt /></span>
      </div>
      <div className="ml-[6px] flex gap-[5px]">
        {apps.map((a, i) => (
          <div key={i} className={`relative flex size-[50px] items-center justify-center rounded-[5px] ${a.state === "active" ? "border border-[#343434] bg-[#2c2c2c]" : ""}`}>
            {a.icon}
            {a.state === "open" && <span className="absolute bottom-px left-[21px] h-[4px] w-[8px] rounded-full bg-[#999]" />}
            {a.state === "active" && <span className="absolute bottom-0 left-[14px] h-[4px] w-[20px] rounded-full bg-[#4cc2ff]" />}
          </div>
        ))}
      </div>
      <div className="ml-auto flex items-center pr-[25px] text-[15px] leading-5">
        <svg viewBox="0 0 14 10" className="h-[10px] w-[14px]" fill="none" stroke="#fff" strokeWidth="1.800"><path d="M1 8l6-6 6 6" /></svg>
        <div className="ml-[25px] w-[32px] text-center text-[14.500px] tracking-[-0.01em]">ENG<br />IN</div>
        <svg viewBox="0 0 20 16" className="ml-[21px] h-4 w-5" fill="none" stroke="#fff" strokeWidth="1.600">
          <path d="M1 6.500q9-9 18 0M4 9.500q6-6 12 0M6.800 12q3.200-3 6.400 0" /><circle cx="10" cy="14" r="1.300" fill="#fff" stroke="none" />
        </svg>
        <svg viewBox="0 0 20 18" className="ml-[10px] h-[18px] w-5" fill="none" stroke="#fff" strokeWidth="1.400">
          <path d="M1 6h3.500L9 2v14l-4.500-4H1z" /><path d="M11.500 6q2 3 0 6" /><path d="M14 4q3.500 5 0 10M16.500 2q5 7 0 14" stroke="#666" />
        </svg>
        <svg viewBox="0 0 20 18" className="ml-[10px] h-[18px] w-5">
          <path d="M6 4h10q2 0 2 2v7q0 2-2 2H3q-2 0-2-2V10" fill="none" stroke="#fff" strokeWidth="1.300" />
          <path d="M7 6h8.500v7H3v-2.500zM18.500 7.500H20v4h-1.500z" fill="#fff" /><path d="M4 0L0 6h2L1.500 9 6 4H4z" fill="#fff" />
        </svg>
        <div className="ml-[18px] w-[80px] text-right text-[14.500px] tracking-[0.006em]"><span className="tracking-[-0.01em]">20:33</span><br />09-04-2023</div>
        <span className="ml-[14px] flex size-5 items-center justify-center rounded-full bg-[#4cc2ff] text-[12px] text-black">1</span>
      </div>
    </footer>
  );
}

export default function App() {
  return (
    <div className={`flex h-[1080px] w-[1920px] flex-col overflow-hidden ${UI}`}>
      <header>
        <TabStrip />
        <Toolbar />
        <BookmarksBar />
      </header>
      <div className="flex h-[891px] shrink-0 overflow-hidden">
        <Sidebar />
        <Content />
        <PageScrollbar />
      </div>
      <Taskbar />
    </div>
  );
}
